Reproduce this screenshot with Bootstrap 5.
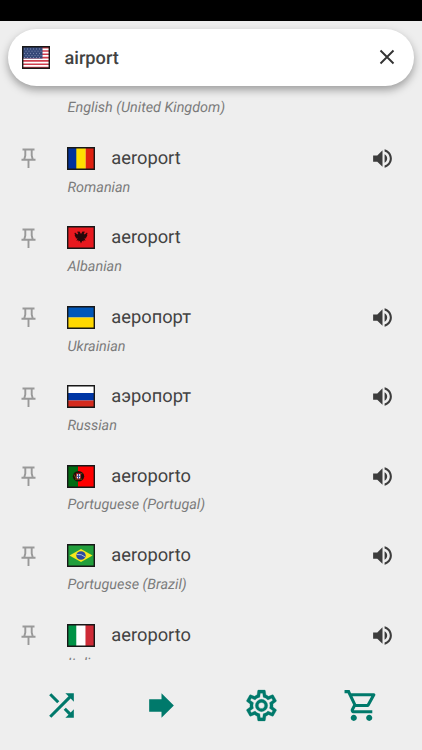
<!DOCTYPE html>
<html lang="en">
<head>
<meta charset="utf-8">
<meta name="viewport" content="width=device-width, initial-scale=1">
<title>Translations</title>
<link href="https://cdn.jsdelivr.net/npm/bootstrap@5.3.0/dist/css/bootstrap.min.css" rel="stylesheet">
<style>
  body { background: #eee; color: #424242; font-family: Roboto, "Noto Sans", sans-serif; height: 750px; text-rendering: geometricPrecision; }
  .status-strip { height: 20.5px; background: #000; }
  .search-wrap { padding: 8px 8px 0; z-index: 2; }
  .search-pill { height: 57px; padding: 0 15px 0 14px; background: #fff; box-shadow: 0 4px 8px rgba(0,0,0,.34); }
  .query { font-size: 18.2px; font-weight: 500; margin: 3px 0 0 14.5px; }
  .results { height: 574.5px; padding-top: 11.2px; }
  .entry { height: 79.45px; padding: 26px 27px 0 20px; }
  .entry-first { height: 21.8px; padding-left: 67.5px; }
  .entry-head { height: 28px; }
  .pin { width: 17px; height: 22px; margin-right: 30px; }
  .flag { width: 28px; height: 23px; }
  .word { font-size: 18.3px; line-height: 28px; margin: 1px 0 0 16.3px; }
  .lang { font-size: 14.4px; line-height: 21px; color: #7b7b7b; font-style: italic; }
  .entry .lang { margin: 4.2px 0 0 47.5px; }
  .bottom-bar { gap: 63px; color: #00796b; padding: 0; }
</style>
</head>
<body class="d-flex flex-column overflow-hidden">
<svg class="d-none" xmlns="http://www.w3.org/2000/svg">
  <symbol id="i-pin" viewBox="0 0 17 22"><path d="M2.500 2.500h12M5.300 2.500v6L4.200 12.500M11.700 2.500v6l1.100 4M1.500 12.700h14M8.500 12.700v8.300" fill="none" stroke="#999" stroke-width="1.900"/></symbol>
  <symbol id="i-vol" viewBox="0 0 24 24"><path d="M3 9v6h4l5 5V4L7 9H3zm13.500 3c0-1.770-1.020-3.290-2.500-4.030v8.050c1.480-.73 2.500-2.250 2.500-4.020zM14 3.230v2.060c2.890.86 5 3.540 5 6.710s-2.110 5.850-5 6.710v2.060c4.010-.91 7-4.490 7-8.770s-2.990-7.860-7-8.770z" fill="#3c3c3c"/></symbol>
  <symbol id="f-ro" viewBox="0 0 28 23"><path fill="#00319c" d="M0 0h10v23H0z"/><path fill="#ffde00" d="M9.300 0h9.400v23H9.300z"/><path fill="#de2110" d="M18.700 0H28v23h-9.300z"/></symbol>
  <symbol id="f-al" viewBox="0 0 28 23"><path fill="#e8191f" d="M0 0h28v23H0z"/><path fill="#26080a" d="M14 8l-1.500-2.500-2.500.3 1.300 1.700-1 1L8 6.500 7.400 8l.9.700-.8.800 1 .7-.6.900 1.300.4-.4 1 1.700-.2-1 2.700 1.700-1 .4 1.500 1.200-.7L14 17.500l1.200-2.700 1.200.7.400-1.500 1.700 1-1-2.700 1.700.2-.4-1 1.300-.4-.6-.9 1-.7-.8-.8.900-.7L20 6.500l-2.300 2-1-1L18 5.800l-2.500-.3z"/></symbol>
  <symbol id="f-ua" viewBox="0 0 28 23"><path fill="#0057b8" d="M0 0h28v11.500H0z"/><path fill="#ffd800" d="M0 11.500h28V23H0z"/></symbol>
  <symbol id="f-ru" viewBox="0 0 28 23"><path fill="#fff" d="M0 0h28v8H0z"/><path fill="#0036a5" d="M0 8h28v7.500H0z"/><path fill="#d52b1e" d="M0 15.500h28V23H0z"/></symbol>
  <symbol id="f-pt" viewBox="0 0 28 23"><path fill="#006b12" d="M0 0h11v23H0z"/><path fill="#f00" d="M11 0h17v23H11z"/><ellipse cx="11.500" cy="11.300" rx="5.700" ry="5.200" fill="#211008"/><path d="M7 9.500l2 4M8 14.200h7M15.500 8l-1.500 1" stroke="#8a7b10" stroke-width=".6"/><path fill="#b01b27" d="M9 8.300h5v4.700q-2.500 3-5 0z"/><path fill="#fff" d="M9.900 9.200h3.200v3.600q-1.600 1.700-3.200 0z"/><path d="M11.500 9v5M9.500 11.300h4" stroke="#334a92" stroke-width="1"/></symbol>
  <symbol id="f-br" viewBox="0 0 28 23"><path fill="#229e3c" d="M0 0h28v23H0z"/><path fill="#f8e71c" d="M2.500 11.500L14 5l11.500 6.500L14 18z"/><ellipse cx="14" cy="11.500" rx="4.700" ry="4.300" fill="#2b49a3"/><path d="M9.600 10.500q5-.8 8.600 2.500" fill="none" stroke="#b9cbd8" stroke-width=".9"/></symbol>
  <symbol id="f-it" viewBox="0 0 28 23"><path fill="#009246" d="M0 0h9.500v23H0z"/><path fill="#fff" d="M9.500 0h9v23h-9z"/><path fill="#ce2b37" d="M18.500 0H28v23h-9.500z"/></symbol>
  <symbol id="f-us" viewBox="0 0 28 23"><path fill="#fff" d="M0 0h28v23H0z"/><path d="M0 1.700h28M0 5h28M0 8.300h28M0 11.600h28M0 14.900h28M0 18.200h28M0 21.500h28" stroke="#cf3d4c" stroke-width="1.600"/><path fill="#354878" d="M0 0h20.500v12.500H0z"/><path d="M2 3h18M3.500 5.200h17M2 7.400h18M3.500 9.600h17M2 11.500h18" stroke="#8794b5" stroke-width=".9" stroke-dasharray="1 2"/></symbol>
  <symbol id="f-frame" viewBox="0 0 28 23"><path d="M.7.700h26.600v21.600H.7z" fill="none" stroke="#171717" stroke-width="1.400"/></symbol>
</svg>

<div class="status-strip flex-shrink-0"></div>
<header class="search-wrap position-relative flex-shrink-0">
  <div class="search-pill rounded-pill d-flex align-items-center">
    <svg class="flag flex-shrink-0"><use href="#f-us"/><use href="#f-frame"/></svg>
    <span class="query">airport</span>
    <svg class="ms-auto" width="24" height="24" viewBox="0 0 24 24"><path d="M5.500 5.500l13 13M18.500 5.500l-13 13" stroke="#333" stroke-width="1.900"/></svg>
  </div>
</header>

<main class="results overflow-hidden flex-shrink-0">
  <div class="entry-first lang">English (United Kingdom)</div>
  <div class="entry">
    <div class="entry-head d-flex align-items-center"><svg class="pin"><use href="#i-pin"/></svg><svg class="flag"><use href="#f-ro"/><use href="#f-frame"/></svg><span class="word">aeroport</span><svg class="ms-auto" width="25" height="25"><use href="#i-vol"/></svg></div>
    <div class="lang">Romanian</div>
  </div>
  <div class="entry">
    <div class="entry-head d-flex align-items-center"><svg class="pin"><use href="#i-pin"/></svg><svg class="flag"><use href="#f-al"/><use href="#f-frame"/></svg><span class="word">aeroport</span></div>
    <div class="lang">Albanian</div>
  </div>
  <div class="entry">
    <div class="entry-head d-flex align-items-center"><svg class="pin"><use href="#i-pin"/></svg><svg class="flag"><use href="#f-ua"/><use href="#f-frame"/></svg><span class="word">аеропорт</span><svg class="ms-auto" width="25" height="25"><use href="#i-vol"/></svg></div>
    <div class="lang">Ukrainian</div>
  </div>
  <div class="entry">
    <div class="entry-head d-flex align-items-center"><svg class="pin"><use href="#i-pin"/></svg><svg class="flag"><use href="#f-ru"/><use href="#f-frame"/></svg><span class="word">аэропорт</span><svg class="ms-auto" width="25" height="25"><use href="#i-vol"/></svg></div>
    <div class="lang">Russian</div>
  </div>
  <div class="entry">
    <div class="entry-head d-flex align-items-center"><svg class="pin"><use href="#i-pin"/></svg><svg class="flag"><use href="#f-pt"/><use href="#f-frame"/></svg><span class="word">aeroporto</span><svg class="ms-auto" width="25" height="25"><use href="#i-vol"/></svg></div>
    <div class="lang">Portuguese (Portugal)</div>
  </div>
  <div class="entry">
    <div class="entry-head d-flex align-items-center"><svg class="pin"><use href="#i-pin"/></svg><svg class="flag"><use href="#f-br"/><use href="#f-frame"/></svg><span class="word">aeroporto</span><svg class="ms-auto" width="25" height="25"><use href="#i-vol"/></svg></div>
    <div class="lang">Portuguese (Brazil)</div>
  </div>
  <div class="entry">
    <div class="entry-head d-flex align-items-center"><svg class="pin"><use href="#i-pin"/></svg><svg class="flag"><use href="#f-it"/><use href="#f-frame"/></svg><span class="word">aeroporto</span><svg class="ms-auto" width="25" height="25"><use href="#i-vol"/></svg></div>
    <div class="lang">Italian</div>
  </div>
</main>

<nav class="bottom-bar flex-grow-1 d-flex justify-content-center align-items-center">
  <svg width="37" height="37" viewBox="0 0 24 24" fill="currentColor"><path d="M10.590 9.170L5.410 4 4 5.410l5.170 5.170 1.420-1.410zM14.500 4l2.040 2.040L4 18.590 5.410 20 17.960 7.460 20 9.500V4h-5.500zm.33 9.410l-1.410 1.410 3.130 3.130L14.500 20H20v-5.500l-2.040 2.040-3.130-3.130z"/></svg>
  <svg width="37" height="37" viewBox="0 0 24 24" fill="currentColor"><path d="M4 8h8V4l8 8-8 8v-4H4z"/></svg>
  <svg width="37" height="37" viewBox="0 0 24 24" fill="currentColor"><path d="M12 8a4 4 0 0 1 4 4 4 4 0 0 1-4 4 4 4 0 0 1-4-4 4 4 0 0 1 4-4m0 2a2 2 0 0 0-2 2 2 2 0 0 0 2 2 2 2 0 0 0 2-2 2 2 0 0 0-2-2m-2 12c-.25 0-.46-.18-.5-.42l-.37-2.650c-.63-.25-1.170-.59-1.690-.99l-2.490 1.010c-.22.08-.49 0-.61-.22l-2-3.460a.493.493 0 0 1 .12-.64l2.110-1.660L4.500 12l.07-1-2.110-1.630a.493.493 0 0 1-.12-.64l2-3.460c.12-.22.39-.31.61-.22l2.490 1c.52-.39 1.060-.73 1.690-.98l.37-2.650c.04-.24.25-.42.5-.42h4c.25 0 .46.18.5.42l.37 2.650c.63.25 1.170.59 1.690.98l2.490-1c.22-.09.49 0 .61.22l2 3.460c.13.22.07.49-.12.64L19.430 11l.07 1-.07 1 2.110 1.630c.19.15.25.42.12.64l-2 3.460c-.12.22-.39.31-.61.22l-2.490-1c-.52.39-1.060.73-1.690.98l-.37 2.650c-.04.24-.25.42-.5.42h-4m1.250-18l-.37 2.610c-1.200.25-2.260.89-3.030 1.780L5.440 7.350l-.75 1.300L6.800 10.200a5.550 5.550 0 0 0 0 3.600l-2.120 1.560.75 1.300 2.430-1.040c.77.88 1.820 1.520 3.010 1.760l.37 2.620h1.520l.37-2.610c1.190-.25 2.240-.89 3.010-1.770l2.430 1.040.75-1.300-2.120-1.550c.4-1.170.4-2.440 0-3.610l2.110-1.550-.75-1.300-2.410 1.040a5.420 5.420 0 0 0-3.030-1.770L12.750 4h-1.500z" stroke="currentColor" stroke-width=".2"/></svg>
  <svg width="37" height="37" viewBox="0 0 24 24" fill="currentColor"><path d="M15.550 13c.75 0 1.410-.41 1.750-1.030l3.580-6.490A.996.996 0 0 0 20.010 4H5.210l-.94-2H1v2h2l3.600 7.590-1.350 2.440C4.520 15.370 5.480 17 7 17h12v-2H7l1.100-2h7.450zM6.160 6h12.150l-2.760 5H8.530L6.160 6zM7 18c-1.100 0-1.990.9-1.990 2S5.900 22 7 22s2-.9 2-2-.9-2-2-2zm10 0c-1.100 0-1.990.9-1.990 2s.89 2 1.990 2 2-.9 2-2-.9-2-2-2z"/></svg>
</nav>
<script src="https://cdn.jsdelivr.net/npm/bootstrap@5.3.0/dist/js/bootstrap.bundle.min.js"></script>
</body>
</html>
